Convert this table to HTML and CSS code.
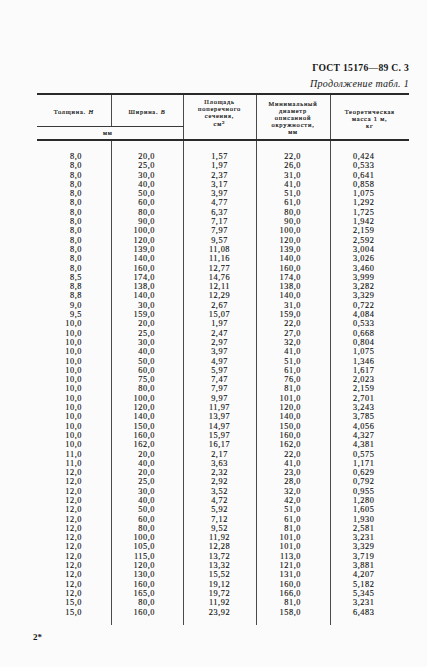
FILE: index.html
```html
<!DOCTYPE html>
<html lang="ru">
<head>
<meta charset="utf-8">
<title>ГОСТ 15176—89 С. 3</title>
<link rel="stylesheet" href="styles.css">
</head>
<body>
<div class="page">
  <div class="running-head">ГОСТ 15176—89 С. 3</div>
  <div class="caption">Продолжение табл. 1</div>
  <table class="data">
    <colgroup>
      <col class="c1"><col class="c2"><col class="c3"><col class="c4"><col class="c5">
    </colgroup>
    <thead>
      <tr class="h1">
        <th class="hh">Толщина. <i>Н</i></th>
        <th class="hh">Ширина. <i>В</i></th>
        <th rowspan="2" class="h3">Площадь<br>поперечного<br>сечения,<br>см<sup>2</sup></th>
        <th rowspan="2" class="h4">Минимальный<br>диаметр<br>описанной<br>окружности,<br>мм</th>
        <th rowspan="2" class="h5">Теоретическая<br>масса 1 м,<br>кг</th>
      </tr>
      <tr class="h2">
        <th colspan="2" class="mm">мм</th>
      </tr>
    </thead>
    <tbody>
      <tr class="sp-top"><td></td><td></td><td></td><td></td><td></td></tr>
      <tr><td>8,0</td><td>20,0</td><td>1,57</td><td>22,0</td><td>0,424</td></tr>
      <tr><td>8,0</td><td>25,0</td><td>1,97</td><td>26,0</td><td>0,533</td></tr>
      <tr><td>8,0</td><td>30,0</td><td>2,37</td><td>31,0</td><td>0,641</td></tr>
      <tr><td>8,0</td><td>40,0</td><td>3,17</td><td>41,0</td><td>0,858</td></tr>
      <tr><td>8,0</td><td>50,0</td><td>3,97</td><td>51,0</td><td>1,075</td></tr>
      <tr><td>8,0</td><td>60,0</td><td>4,77</td><td>61,0</td><td>1,292</td></tr>
      <tr><td>8,0</td><td>80,0</td><td>6,37</td><td>80,0</td><td>1,725</td></tr>
      <tr><td>8,0</td><td>90,0</td><td>7,17</td><td>90,0</td><td>1,942</td></tr>
      <tr><td>8,0</td><td>100,0</td><td>7,97</td><td>100,0</td><td>2,159</td></tr>
      <tr><td>8,0</td><td>120,0</td><td>9,57</td><td>120,0</td><td>2,592</td></tr>
      <tr><td>8,0</td><td>139,0</td><td>11,08</td><td>139,0</td><td>3,004</td></tr>
      <tr><td>8,0</td><td>140,0</td><td>11,16</td><td>140,0</td><td>3,026</td></tr>
      <tr><td>8,0</td><td>160,0</td><td>12,77</td><td>160,0</td><td>3,460</td></tr>
      <tr><td>8,5</td><td>174,0</td><td>14,76</td><td>174,0</td><td>3,999</td></tr>
      <tr><td>8,8</td><td>138,0</td><td>12,11</td><td>138,0</td><td>3,282</td></tr>
      <tr><td>8,8</td><td>140,0</td><td>12,29</td><td>140,0</td><td>3,329</td></tr>
      <tr><td>9,0</td><td>30,0</td><td>2,67</td><td>31,0</td><td>0,722</td></tr>
      <tr><td>9,5</td><td>159,0</td><td>15,07</td><td>159,0</td><td>4,084</td></tr>
      <tr><td>10,0</td><td>20,0</td><td>1,97</td><td>22,0</td><td>0,533</td></tr>
      <tr><td>10,0</td><td>25,0</td><td>2,47</td><td>27,0</td><td>0,668</td></tr>
      <tr><td>10,0</td><td>30,0</td><td>2,97</td><td>32,0</td><td>0,804</td></tr>
      <tr><td>10,0</td><td>40,0</td><td>3,97</td><td>41,0</td><td>1,075</td></tr>
      <tr><td>10,0</td><td>50,0</td><td>4,97</td><td>51,0</td><td>1,346</td></tr>
      <tr><td>10,0</td><td>60,0</td><td>5,97</td><td>61,0</td><td>1,617</td></tr>
      <tr><td>10,0</td><td>75,0</td><td>7,47</td><td>76,0</td><td>2,023</td></tr>
      <tr><td>10,0</td><td>80,0</td><td>7,97</td><td>81,0</td><td>2,159</td></tr>
      <tr><td>10,0</td><td>100,0</td><td>9,97</td><td>101,0</td><td>2,701</td></tr>
      <tr><td>10,0</td><td>120,0</td><td>11,97</td><td>120,0</td><td>3,243</td></tr>
      <tr><td>10,0</td><td>140,0</td><td>13,97</td><td>140,0</td><td>3,785</td></tr>
      <tr><td>10,0</td><td>150,0</td><td>14,97</td><td>150,0</td><td>4,056</td></tr>
      <tr><td>10,0</td><td>160,0</td><td>15,97</td><td>160,0</td><td>4,327</td></tr>
      <tr><td>10,0</td><td>162,0</td><td>16,17</td><td>162,0</td><td>4,381</td></tr>
      <tr><td>11,0</td><td>20,0</td><td>2,17</td><td>22,0</td><td>0,575</td></tr>
      <tr><td>11,0</td><td>40,0</td><td>3,63</td><td>41,0</td><td>1,171</td></tr>
      <tr><td>12,0</td><td>20,0</td><td>2,32</td><td>23,0</td><td>0,629</td></tr>
      <tr><td>12,0</td><td>25,0</td><td>2,92</td><td>28,0</td><td>0,792</td></tr>
      <tr><td>12,0</td><td>30,0</td><td>3,52</td><td>32,0</td><td>0,955</td></tr>
      <tr><td>12,0</td><td>40,0</td><td>4,72</td><td>42,0</td><td>1,280</td></tr>
      <tr><td>12,0</td><td>50,0</td><td>5,92</td><td>51,0</td><td>1,605</td></tr>
      <tr><td>12,0</td><td>60,0</td><td>7,12</td><td>61,0</td><td>1,930</td></tr>
      <tr><td>12,0</td><td>80,0</td><td>9,52</td><td>81,0</td><td>2,581</td></tr>
      <tr><td>12,0</td><td>100,0</td><td>11,92</td><td>101,0</td><td>3,231</td></tr>
      <tr><td>12,0</td><td>105,0</td><td>12,28</td><td>101,0</td><td>3,329</td></tr>
      <tr><td>12,0</td><td>115,0</td><td>13,72</td><td>113,0</td><td>3,719</td></tr>
      <tr><td>12,0</td><td>120,0</td><td>13,32</td><td>121,0</td><td>3,881</td></tr>
      <tr><td>12,0</td><td>130,0</td><td>15,52</td><td>131,0</td><td>4,207</td></tr>
      <tr><td>12,0</td><td>160,0</td><td>19,12</td><td>160,0</td><td>5,182</td></tr>
      <tr><td>12,0</td><td>165,0</td><td>19,72</td><td>166,0</td><td>5,345</td></tr>
      <tr><td>15,0</td><td>80,0</td><td>11,92</td><td>81,0</td><td>3,231</td></tr>
      <tr><td>15,0</td><td>160,0</td><td>23,92</td><td>158,0</td><td>6,483</td></tr>
      <tr class="sp-bottom"><td></td><td></td><td></td><td></td><td></td></tr>
    </tbody>
  </table>
  <div class="signature">2*</div>
</div>
</body>
</html>
```

FILE: styles.css
```css
html, body {
  margin: 0;
  padding: 0;
  background: #fbfbfb;
}

.page {
  width: 427px;
  height: 667px;
  box-sizing: border-box;
  padding: 62px 18px 0 37px;
  font-family: "Liberation Serif", "DejaVu Serif", serif;
  color: #151515;
}

.running-head {
  text-align: right;
  font-weight: bold;
  font-size: 9.6px;
  line-height: 12px;
  letter-spacing: 0.3px;
}

.caption {
  margin-top: 4px;
  text-align: right;
  font-style: italic;
  font-size: 10px;
  line-height: 12px;
  letter-spacing: 0.3px;
}

.data {
  margin-top: 3px;
  width: 372px;
  border-collapse: collapse;
  table-layout: fixed;
}

.c1 { width: 74px; }
.c2 { width: 72px; }
.c3 { width: 73px; }
.c4 { width: 74px; }
.c5 { width: 79px; }

.data thead tr.h1 {
  border-top: 2px solid #2a2a2a;
}

.data thead tr.h2 {
  border-bottom: 2px solid #2a2a2a;
}

.data th {
  font-weight: normal;
  font-size: 6.4px;
  line-height: 7.2px;
  padding: 0;
  text-align: center;
  vertical-align: top;
  letter-spacing: 0.8px;
  -webkit-text-stroke: 0.2px #151515;
}

.data th + th,
.data td + td {
  border-left: 1px solid #4a4a4a;
}

.data th.hh {
  height: 29px;
  vertical-align: middle;
  border-bottom: 1px solid #3a3a3a;
  padding-top: 2px;
}

.data tr.h2 th.mm {
  height: 12px;
  vertical-align: middle;
  border-left: none;
  padding-right: 4px;
}

.data th.h3 { padding-top: 3px; }
.data th.h4 { padding-top: 5px; line-height: 7px; }
.data th.h5 { padding-top: 14px; line-height: 6.8px; }

.data sup {
  font-size: 5px;
  line-height: 0;
  vertical-align: 2px;
}

.data td {
  font-size: 8.3px;
  line-height: 9.3px;
  height: 9.3px;
  padding: 0;
  white-space: nowrap;
  letter-spacing: 0.55px;
  -webkit-text-stroke: 0.15px #151515;
}

.data td:nth-child(1) { text-align: right; padding-right: 28.5px; }
.data td:nth-child(2) { text-align: right; padding-right: 27.5px; }
.data td:nth-child(3) { text-align: center; }
.data td:nth-child(4) { text-align: right; padding-right: 28.5px; }
.data td:nth-child(5) { text-align: center; padding-right: 12px; }

.data tr.sp-top td { height: 11px; }
.data tr.sp-bottom td { height: 8px; }

.signature {
  margin: 6px 0 0 -4px;
  font-size: 9px;
  font-weight: bold;
  line-height: 12px;
}
```
